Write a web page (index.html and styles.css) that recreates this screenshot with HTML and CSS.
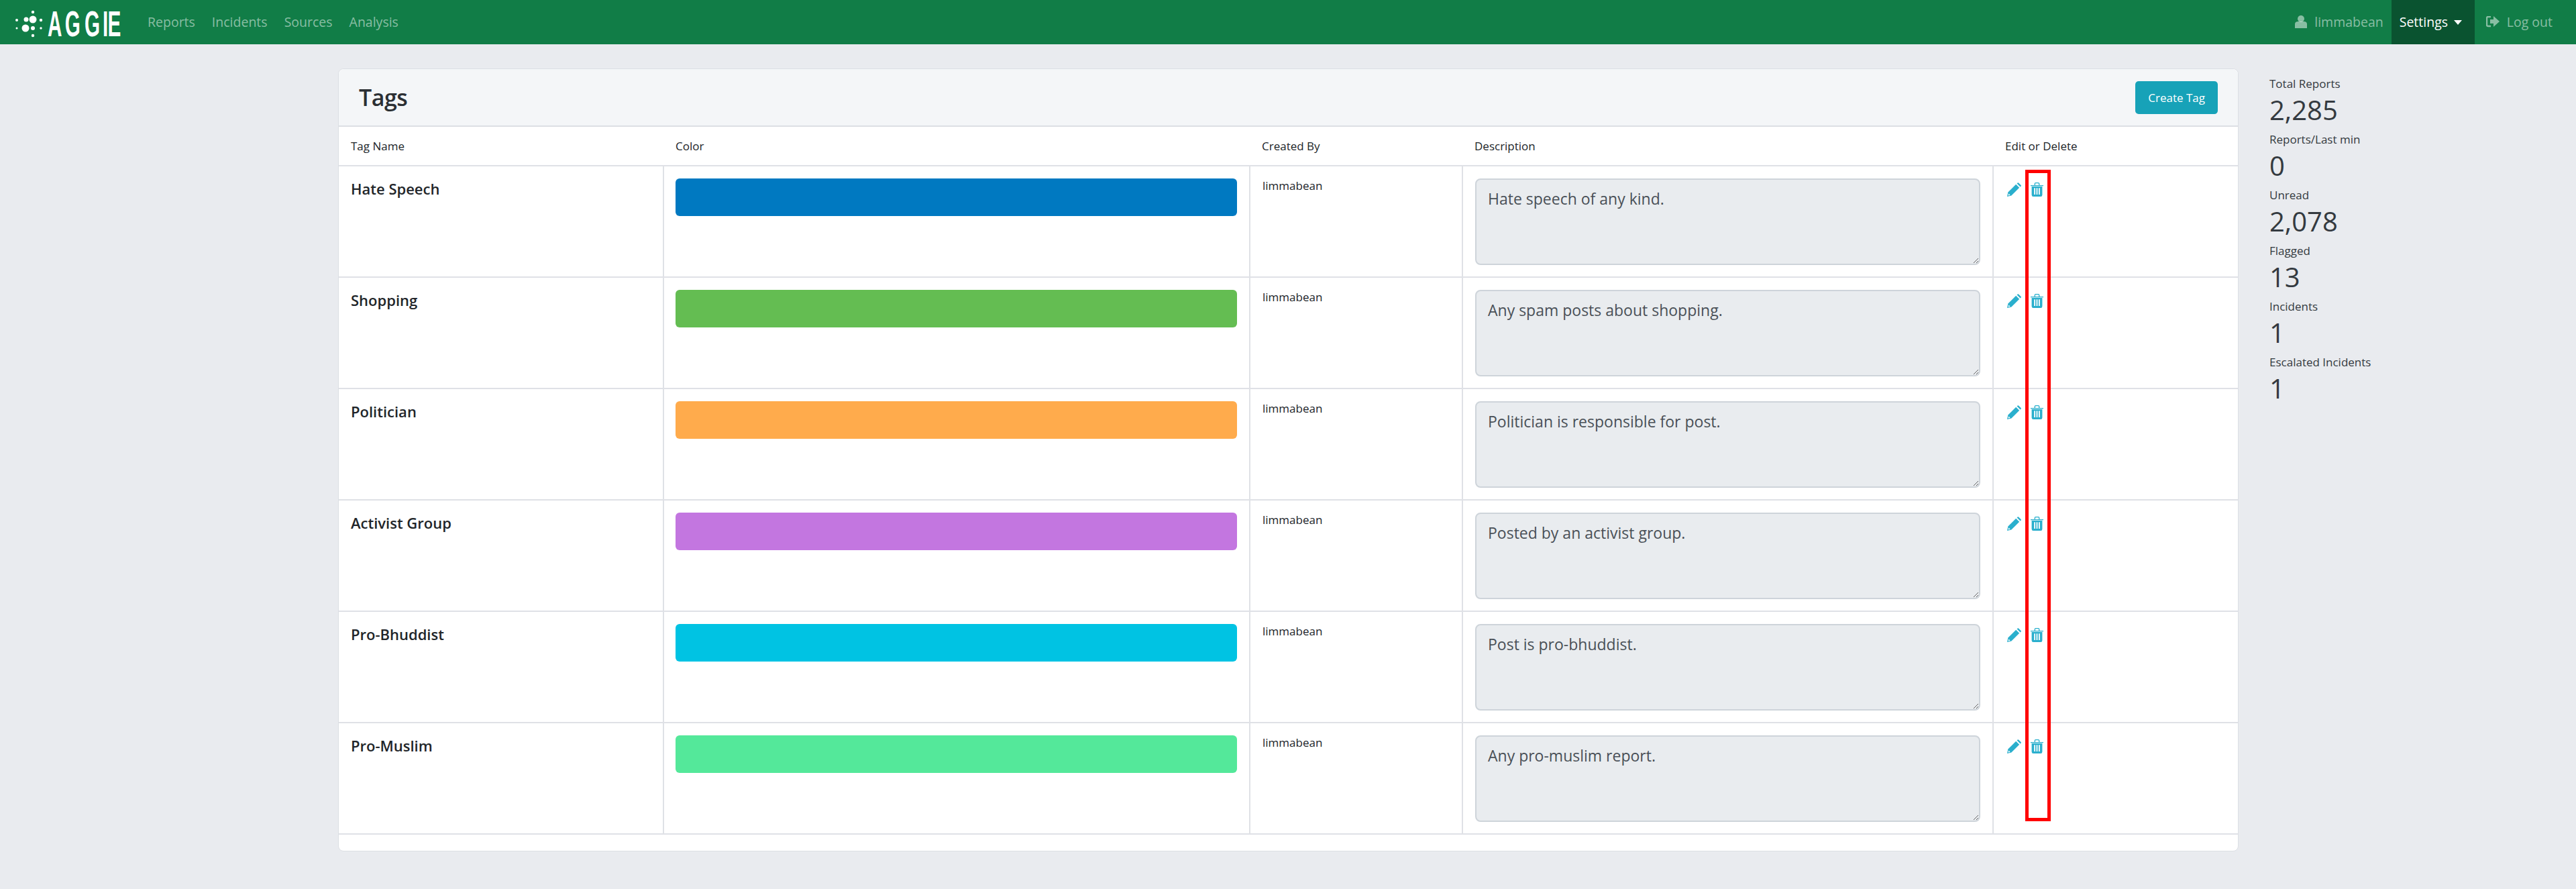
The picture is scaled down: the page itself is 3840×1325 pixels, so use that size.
FILE: index.html
```html
<!DOCTYPE html>
<html>
	<head>
		<meta http-equiv="Content-Type" content="text/html; charset=utf-8" />
		<title>Tags</title>
		<link rel="stylesheet" href="styles.css">
	</head>
	<body>
		<nav class="topbar">
			<svg class="logo" width="190" height="66" viewBox="0 0 190 66">
				<g fill="#fff">
					<circle cx="39" cy="29" r="3.5"/><circle cx="49" cy="29" r="5.5"/>
					<circle cx="38" cy="42" r="5.5"/><circle cx="49" cy="42" r="3"/>
					<circle cx="49" cy="18" r="2.2"/><circle cx="61" cy="30" r="2.2"/>
					<circle cx="61" cy="42" r="1.7"/><circle cx="25" cy="30" r="2"/>
					<circle cx="25" cy="42" r="1.5"/><circle cx="49" cy="53" r="2.2"/>
				</g>
				<text class="logo-text" x="129 176 229 278 292" y="54" transform="scale(.55 1)">AGGIE</text>
			</svg>
			<ul class="nav-links">
				<li>Reports</li>
				<li>Incidents</li>
				<li>Sources</li>
				<li>Analysis</li>
			</ul>
			<div class="nav-right">
				<span class="nav-user">
					<svg width="18" height="19" viewBox="0 0 18 19"><circle cx="9" cy="5" r="5"/><path d="M0 19V13Q0 9 5 9H13Q18 9 18 13V19Z"/></svg>
					limmabean
				</span>
				<span class="nav-settings">Settings<i class="caret"></i></span>
				<span class="nav-logout">
					<svg width="20" height="18" viewBox="0 0 20 18"><path d="M7 1H3Q1 1 1 3V13Q1 15 3 15H7" fill="none" stroke="currentColor" stroke-width="2.4"/><path d="M6 5H11V0L20 8L11 16V11H6Z"/></svg>
					Log out
				</span>
			</div>
		</nav>

		<div class="page">
			<div class="card">
				<div class="card-head">
					<h1>Tags</h1>
					<a class="btn-create">Create Tag</a>
				</div>
				<table class="tags">
					<colgroup>
						<col class="c-name"><col class="c-color"><col class="c-by"><col class="c-desc"><col class="c-act">
					</colgroup>
					<thead>
						<tr><th>Tag Name</th><th>Color</th><th>Created By</th><th>Description</th><th>Edit or Delete</th></tr>
					</thead>
					<tbody>
						<tr>
							<td class="tag-name">Hate Speech</td>
							<td><div class="swatch" style="background:#0079c1"></div></td>
							<td class="by">limmabean</td>
							<td><textarea readonly>Hate speech of any kind.</textarea></td>
							<td><div class="act"><svg class="ico"><use href="#pencil"/></svg><svg class="ico"><use href="#trash"/></svg></div></td>
						</tr>
						<tr>
							<td class="tag-name">Shopping</td>
							<td><div class="swatch" style="background:#64bd52"></div></td>
							<td class="by">limmabean</td>
							<td><textarea readonly>Any spam posts about shopping.</textarea></td>
							<td><div class="act"><svg class="ico"><use href="#pencil"/></svg><svg class="ico"><use href="#trash"/></svg></div></td>
						</tr>
						<tr>
							<td class="tag-name">Politician</td>
							<td><div class="swatch" style="background:#ffab4c"></div></td>
							<td class="by">limmabean</td>
							<td><textarea readonly>Politician is responsible for post.</textarea></td>
							<td><div class="act"><svg class="ico"><use href="#pencil"/></svg><svg class="ico"><use href="#trash"/></svg></div></td>
						</tr>
						<tr>
							<td class="tag-name">Activist Group</td>
							<td><div class="swatch" style="background:#c376e0"></div></td>
							<td class="by">limmabean</td>
							<td><textarea readonly>Posted by an activist group.</textarea></td>
							<td><div class="act"><svg class="ico"><use href="#pencil"/></svg><svg class="ico"><use href="#trash"/></svg></div></td>
						</tr>
						<tr>
							<td class="tag-name">Pro-Bhuddist</td>
							<td><div class="swatch" style="background:#00c3e3"></div></td>
							<td class="by">limmabean</td>
							<td><textarea readonly>Post is pro-bhuddist.</textarea></td>
							<td><div class="act"><svg class="ico"><use href="#pencil"/></svg><svg class="ico"><use href="#trash"/></svg></div></td>
						</tr>
						<tr>
							<td class="tag-name">Pro-Muslim</td>
							<td><div class="swatch" style="background:#54e89a"></div></td>
							<td class="by">limmabean</td>
							<td><textarea readonly>Any pro-muslim report.</textarea></td>
							<td><div class="act"><svg class="ico"><use href="#pencil"/></svg><svg class="ico"><use href="#trash"/></svg></div></td>
						</tr>
					</tbody>
				</table>
				<div class="highlight"></div>
			</div>

			<aside class="stats">
				<div class="stat"><span>Total Reports</span><b>2,285</b></div>
				<div class="stat"><span>Reports/Last min</span><b>0</b></div>
				<div class="stat"><span>Unread</span><b>2,078</b></div>
				<div class="stat"><span>Flagged</span><b>13</b></div>
				<div class="stat"><span>Incidents</span><b>1</b></div>
				<div class="stat"><span>Escalated Incidents</span><b>1</b></div>
			</aside>
		</div>

		<svg class="defs" width="0" height="0">
			<symbol id="pencil" viewBox="0 0 21 21">
				<path d="M0 21L1.4 14.6L13.2 2.8L18.2 7.8L6.4 19.6Z"/>
				<path d="M14.6 1.4L15.6 .4Q16.2 -.1 17 .4L20.6 4Q21.1 4.8 20.6 5.4L19.6 6.4Z"/>
				<path d="M2.2 16.4L4.6 18.8L1.6 19.4Z" fill="#fff"/>
			</symbol>
			<symbol id="trash" viewBox="0 0 19 21">
				<path fill-rule="evenodd" d="M0 4H5.6V2Q5.6 0 7.6 0H11.4Q13.4 0 13.4 2V4H19V5.2H0ZM6.9 4H12.1V2.2Q12.1 1.3 11.2 1.3H7.8Q6.9 1.3 6.9 2.2Z"/>
				<path fill-rule="evenodd" d="M1.6 6H17.4V18.5Q17.4 21 15 21H4Q1.6 21 1.6 18.5ZM5.2 8.2V18H7V8.2ZM8.6 8.2V18H10.4V8.2ZM12 8.2V18H13.8V8.2Z"/>
			</symbol>
		</svg>
	</body>
</html>
```

FILE: styles.css
```css
*{
	box-sizing: border-box;
}
body{
	margin: 0;
	min-height: 1325px;
	background-color: #e9ebef;
	color: #212529;
	font-family: "Open Sans", "Noto Sans", sans-serif;
	font-size: 17px;
}
.defs{
	position: absolute;
}

/* top bar */
.topbar{
	display: flex;
	align-items: stretch;
	height: 66px;
	background-color: #117d47;
	color: rgba(255,255,255,.5);
	font-size: 19.5px;
	line-height: 66px;
}
.logo{
	flex: none;
	margin-right: 30px;
}
.logo-text{
	fill: #fff;
	font-family: "Liberation Sans", sans-serif;
	font-size: 54px;
	font-weight: 700;
}
.nav-links{
	display: flex;
	gap: 25px;
	margin: 0;
	padding: 0;
	list-style: none;
}
.nav-right{
	display: flex;
	margin-left: auto;
	margin-right: 35px;
}
.nav-user svg, .nav-logout svg{
	fill: currentColor;
	margin-right: 6px;
	vertical-align: -2px;
}
.nav-user{
	padding-right: 12px;
}
.nav-settings{
	padding: 0 12px;
	width: 124px;
	background-color: #0a5330;
	color: #fff;
	white-space: nowrap;
}
.nav-logout{
	padding-left: 17px;
}
.caret{
	display: inline-block;
	margin-left: 9px;
	border-top: 7px solid #fff;
	border-left: 6px solid transparent;
	border-right: 6px solid transparent;
	vertical-align: 3px;
}

/* content */
.page{
	display: flex;
	align-items: flex-start;
	padding: 36px 0 0 504px;
}
.card{
	position: relative;
	flex: none;
	width: 2833px;
	height: 1167px;
	background-color: #fff;
	border: 1px solid #dcdfe4;
	border-radius: 8px;
}
.card-head{
	display: flex;
	align-items: center;
	justify-content: space-between;
	height: 86px;
	padding: 0 30px;
	background-color: #f4f6f8;
	border-bottom: 2px solid #dcdfe4;
	border-radius: 8px 8px 0 0;
}
.card-head h1{
	margin: 0;
	font-size: 34px;
	font-weight: 600;
	letter-spacing: -.5px;
	color: #2b2f33;
}
.btn-create{
	display: block;
	height: 49px;
	padding: 0 19px;
	background-color: #17a2b8;
	border-radius: 5px;
	color: #fff;
	font-size: 17px;
	line-height: 49px;
}
.tags{
	width: 100%;
	table-layout: fixed;
	border-collapse: collapse;
}
.c-name{
	width: 484px;
}
.c-color{
	width: 874px;
}
.c-by{
	width: 317px;
}
.c-desc{
	width: 791px;
}
.tags th{
	height: 58px;
	padding: 0 0 0 18px;
	border-bottom: 2px solid #dfe1e6;
	font-weight: 400;
	font-size: 17px;
	text-align: left;
}
.tags td{
	height: 166px;
	padding: 18px 18px 0;
	border: 2px solid #dfe1e6;
	border-top: none;
	vertical-align: top;
}
.tags tr td:first-child{
	border-left: none;
}
.tags tr td:last-child{
	border-right: none;
}
.tags td.tag-name{
	font-size: 22px;
	font-weight: 600;
	line-height: 30px;
}
.tags td.by{
	padding-top: 17px;
	line-height: 24px;
}
.swatch{
	height: 56px;
	margin-left: -1px;
	border-radius: 6px;
}
.tags textarea{
	display: block;
	width: 753px;
	height: 129px;
	padding: 12px 17px;
	background-color: #e9ecef;
	border: 2px solid #ced4da;
	border-radius: 8px;
	color: #495057;
	font-family: inherit;
	font-size: 23px;
	outline: none;
}
.act{
	display: flex;
	gap: 13px;
	margin: 6px 0 0 2px;
	color: #2aafcd;
}
.ico{
	width: 21px;
	height: 21px;
	fill: currentColor;
}
.highlight{
	position: absolute;
	top: 150px;
	left: 2514px;
	width: 38px;
	height: 971px;
	border: 5px solid #f00;
}

/* side numbers */
.stats{
	margin-left: 46px;
	padding-top: 10px;
	color: #343a40;
}
.stat{
	height: 83px;
}
.stat span{
	display: block;
	font-size: 17px;
	line-height: 26px;
}
.stat b{
	display: block;
	font-size: 40px;
	font-weight: 400;
	line-height: 52px;
}
```
